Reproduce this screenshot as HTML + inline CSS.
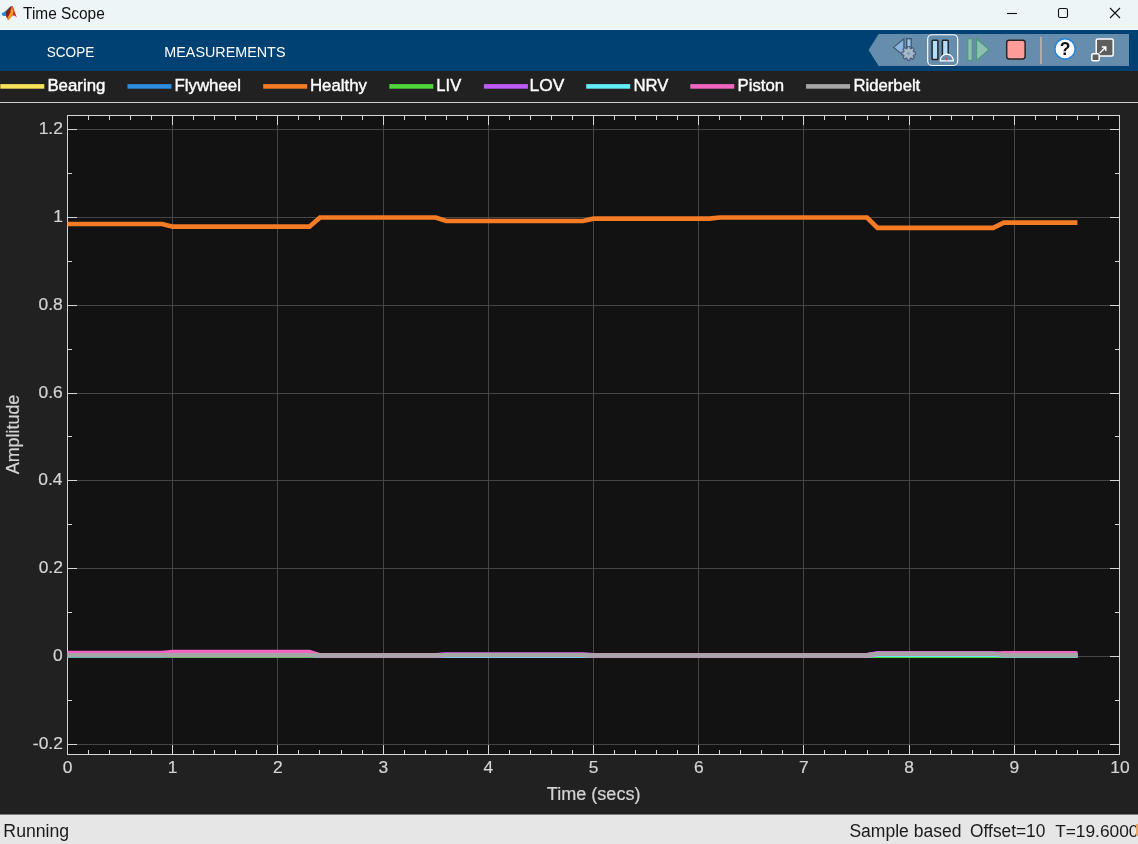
<!DOCTYPE html>
<html>
<head>
<meta charset="utf-8">
<title>Time Scope</title>
<style>
html,body{margin:0;padding:0;}
body{width:1138px;height:844px;overflow:hidden;background:#212121;position:relative;font-family:"Liberation Sans",sans-serif;}
#titlebar{position:absolute;left:0;top:0;width:1138px;height:29px;background:#edf5f7;border-bottom:1px solid #fbfdfd;}
#strip{position:absolute;left:0;top:30px;width:1138px;height:41px;background:#004173;}
#legend{position:absolute;left:0;top:71px;width:1138px;height:31px;background:#212121;white-space:nowrap;overflow:hidden;}
#legline{position:absolute;left:0;top:102px;width:1138px;height:1px;background:#cfcfcf;}
.li{position:relative;display:inline-block;height:31px;vertical-align:top;margin-right:24px;}
.li i{display:inline-block;width:44px;height:4.6px;margin-right:2px;position:relative;top:-4.1px;vertical-align:baseline;}
.li b{font-weight:normal;font-size:16.67px;color:#f4f4f4;line-height:31px;position:relative;top:1.2px;}
#status{position:absolute;left:0;top:814px;width:1138px;height:29px;border-top:1px solid #7c7c7c;background:#e6e6e6;font-size:17.33px;color:#1c1c1c;white-space:pre;overflow:hidden;}
#status span{position:absolute;top:0;line-height:30px;}
#plot{position:absolute;left:0;top:0;will-change:transform;}
#chrome{position:absolute;left:0;top:0;will-change:transform;}
</style>
</head>
<body>
<div id="titlebar"></div>
<div id="strip"></div>
<div id="legend"></div>
<div id="legline"></div>
<div id="status"></div>
<svg id="plot" width="1138" height="844" viewBox="0 0 1138 844">
<rect x="67" y="115" width="1053" height="640" fill="#121212"/>
<path d="M172.5 115.5V754.5M277.5 115.5V754.5M383.5 115.5V754.5M488.5 115.5V754.5M593.5 115.5V754.5M698.5 115.5V754.5M803.5 115.5V754.5M909.5 115.5V754.5M1014.5 115.5V754.5M67.5 129.5H1119.5M67.5 217.5H1119.5M67.5 305.5H1119.5M67.5 393.5H1119.5M67.5 480.5H1119.5M67.5 568.5H1119.5M67.5 656.5H1119.5M67.5 744.5H1119.5" stroke="#454545" stroke-width="1" fill="none" shape-rendering="crispEdges"/>
<path d="M88.5 115.5v4.5M88.5 754.5v-4.5M109.5 115.5v4.5M109.5 754.5v-4.5M130.5 115.5v4.5M130.5 754.5v-4.5M151.5 115.5v4.5M151.5 754.5v-4.5M172.5 115.5v9.5M172.5 754.5v-9.5M193.5 115.5v4.5M193.5 754.5v-4.5M214.5 115.5v4.5M214.5 754.5v-4.5M235.5 115.5v4.5M235.5 754.5v-4.5M256.5 115.5v4.5M256.5 754.5v-4.5M277.5 115.5v9.5M277.5 754.5v-9.5M298.5 115.5v4.5M298.5 754.5v-4.5M319.5 115.5v4.5M319.5 754.5v-4.5M341.5 115.5v4.5M341.5 754.5v-4.5M362.5 115.5v4.5M362.5 754.5v-4.5M383.5 115.5v9.5M383.5 754.5v-9.5M404.5 115.5v4.5M404.5 754.5v-4.5M425.5 115.5v4.5M425.5 754.5v-4.5M446.5 115.5v4.5M446.5 754.5v-4.5M467.5 115.5v4.5M467.5 754.5v-4.5M488.5 115.5v9.5M488.5 754.5v-9.5M509.5 115.5v4.5M509.5 754.5v-4.5M530.5 115.5v4.5M530.5 754.5v-4.5M551.5 115.5v4.5M551.5 754.5v-4.5M572.5 115.5v4.5M572.5 754.5v-4.5M593.5 115.5v9.5M593.5 754.5v-9.5M614.5 115.5v4.5M614.5 754.5v-4.5M635.5 115.5v4.5M635.5 754.5v-4.5M656.5 115.5v4.5M656.5 754.5v-4.5M677.5 115.5v4.5M677.5 754.5v-4.5M698.5 115.5v9.5M698.5 754.5v-9.5M719.5 115.5v4.5M719.5 754.5v-4.5M740.5 115.5v4.5M740.5 754.5v-4.5M761.5 115.5v4.5M761.5 754.5v-4.5M782.5 115.5v4.5M782.5 754.5v-4.5M803.5 115.5v9.5M803.5 754.5v-9.5M824.5 115.5v4.5M824.5 754.5v-4.5M845.5 115.5v4.5M845.5 754.5v-4.5M867.5 115.5v4.5M867.5 754.5v-4.5M888.5 115.5v4.5M888.5 754.5v-4.5M909.5 115.5v9.5M909.5 754.5v-9.5M930.5 115.5v4.5M930.5 754.5v-4.5M951.5 115.5v4.5M951.5 754.5v-4.5M972.5 115.5v4.5M972.5 754.5v-4.5M993.5 115.5v4.5M993.5 754.5v-4.5M1014.5 115.5v9.5M1014.5 754.5v-9.5M1035.5 115.5v4.5M1035.5 754.5v-4.5M1056.5 115.5v4.5M1056.5 754.5v-4.5M1077.5 115.5v4.5M1077.5 754.5v-4.5M1098.5 115.5v4.5M1098.5 754.5v-4.5M67.5 744.5h9.5M1119.5 744.5h-9.5M67.5 700.5h4.5M1119.5 700.5h-4.5M67.5 656.5h9.5M1119.5 656.5h-9.5M67.5 612.5h4.5M1119.5 612.5h-4.5M67.5 568.5h9.5M1119.5 568.5h-9.5M67.5 524.5h4.5M1119.5 524.5h-4.5M67.5 480.5h9.5M1119.5 480.5h-9.5M67.5 436.5h4.5M1119.5 436.5h-4.5M67.5 393.5h9.5M1119.5 393.5h-9.5M67.5 349.5h4.5M1119.5 349.5h-4.5M67.5 305.5h9.5M1119.5 305.5h-9.5M67.5 261.5h4.5M1119.5 261.5h-4.5M67.5 217.5h9.5M1119.5 217.5h-9.5M67.5 173.5h4.5M1119.5 173.5h-4.5M67.5 129.5h9.5M1119.5 129.5h-9.5" stroke="#d6d6d6" stroke-width="1" fill="none"/>
<rect x="67.5" y="115.5" width="1052.0" height="639.0" fill="none" stroke="#d6d6d6" stroke-width="1" shape-rendering="crispEdges"/>
<polyline points="67.50,655.30 309.46,655.30 319.98,655.40 1077.42,655.40" fill="none" stroke="#f7e25a" stroke-width="4.7" stroke-linejoin="miter"/>
<polyline points="67.50,655.30 309.46,655.30 319.98,655.40 1077.42,655.40" fill="none" stroke="#2d8ce0" stroke-width="4.7" stroke-linejoin="miter"/>
<polyline points="67.50,224.00 162.18,224.00 172.70,226.70 309.46,226.70 319.98,217.50 435.70,217.50 446.22,221.00 582.98,221.00 593.50,218.70 709.22,218.70 719.74,217.50 867.02,217.50 877.54,227.90 993.26,227.90 1003.78,222.70 1077.42,222.70" fill="none" stroke="#f57b25" stroke-width="4.7" stroke-linejoin="miter"/>
<polyline points="67.50,655.15 162.18,655.15 172.70,655.70 309.46,655.70 319.98,655.40 867.02,655.40 877.54,655.65 993.26,655.65 1003.78,655.40 1077.42,655.40" fill="none" stroke="#50d73c" stroke-width="4.7" stroke-linejoin="miter"/>
<polyline points="67.50,655.00 309.46,655.00 319.98,655.40 435.70,655.40 446.22,654.60 582.98,654.60 593.50,655.40 867.02,655.40 877.54,653.35 993.26,653.35 1003.78,655.00 1077.42,655.00" fill="none" stroke="#be5af5" stroke-width="4.7" stroke-linejoin="miter"/>
<polyline points="67.50,654.95 162.18,654.95 172.70,654.50 309.46,654.50 319.98,655.40 435.70,655.40 446.22,655.70 582.98,655.70 593.50,655.40 867.02,655.40 877.54,654.55 993.26,654.55 1003.78,655.10 1077.42,655.10" fill="none" stroke="#64ebfa" stroke-width="4.7" stroke-linejoin="miter"/>
<polyline points="67.50,653.15 162.18,653.15 172.70,652.10 309.46,652.10 319.98,655.40 435.70,655.40 446.22,655.00 582.98,655.00 593.50,655.40 867.02,655.40 877.54,653.75 993.26,653.75 1003.78,653.30 1077.42,653.30" fill="none" stroke="#f065c0" stroke-width="4.7" stroke-linejoin="miter"/>
<polyline points="67.50,654.95 309.46,654.95 319.98,655.40 435.70,655.40 446.22,655.00 582.98,655.00 593.50,655.40 867.02,655.40 877.54,653.75 993.26,653.75 1003.78,655.10 1077.42,655.10" fill="none" stroke="#a6a6a6" stroke-width="4.1" stroke-linejoin="miter"/>
<g font-family="Liberation Sans, sans-serif" fill="#d4d4d4" stroke="#d4d4d4" stroke-width="0.2">
<text x="38.66" y="133.90" font-size="17.00" textLength="24.22" lengthAdjust="spacingAndGlyphs" >1.2</text>
<text x="53.21" y="221.90" font-size="17.00" textLength="9.69" lengthAdjust="spacingAndGlyphs" >1</text>
<text x="38.53" y="309.90" font-size="17.00" textLength="24.22" lengthAdjust="spacingAndGlyphs" >0.8</text>
<text x="38.57" y="397.90" font-size="17.00" textLength="24.22" lengthAdjust="spacingAndGlyphs" >0.6</text>
<text x="38.31" y="484.90" font-size="17.00" textLength="24.22" lengthAdjust="spacingAndGlyphs" >0.4</text>
<text x="38.66" y="572.90" font-size="17.00" textLength="24.22" lengthAdjust="spacingAndGlyphs" >0.2</text>
<text x="53.03" y="660.90" font-size="17.00" textLength="9.69" lengthAdjust="spacingAndGlyphs" >0</text>
<text x="32.86" y="748.90" font-size="17.00" textLength="30.03" lengthAdjust="spacingAndGlyphs" >-0.2</text>
<text x="62.76" y="773.00" font-size="17.00" textLength="9.69" lengthAdjust="spacingAndGlyphs" >0</text>
<text x="167.72" y="773.00" font-size="17.00" textLength="9.69" lengthAdjust="spacingAndGlyphs" >1</text>
<text x="273.14" y="773.00" font-size="17.00" textLength="9.69" lengthAdjust="spacingAndGlyphs" >2</text>
<text x="378.41" y="773.00" font-size="17.00" textLength="9.69" lengthAdjust="spacingAndGlyphs" >3</text>
<text x="483.61" y="773.00" font-size="17.00" textLength="9.69" lengthAdjust="spacingAndGlyphs" >4</text>
<text x="588.76" y="773.00" font-size="17.00" textLength="9.69" lengthAdjust="spacingAndGlyphs" >5</text>
<text x="693.90" y="773.00" font-size="17.00" textLength="9.69" lengthAdjust="spacingAndGlyphs" >6</text>
<text x="799.14" y="773.00" font-size="17.00" textLength="9.69" lengthAdjust="spacingAndGlyphs" >7</text>
<text x="904.34" y="773.00" font-size="17.00" textLength="9.69" lengthAdjust="spacingAndGlyphs" >8</text>
<text x="1009.56" y="773.00" font-size="17.00" textLength="9.69" lengthAdjust="spacingAndGlyphs" >9</text>
<text x="1110.30" y="773.00" font-size="17.00" textLength="19.38" lengthAdjust="spacingAndGlyphs" >10</text>
<text x="546.84" y="799.60" font-size="17.60" textLength="93.65" lengthAdjust="spacingAndGlyphs" xml:space="preserve" >Time (secs)</text>
<g transform="translate(18.8 474.5) rotate(-90)"><text x="0.30" y="0.00" font-size="17.60" textLength="79.49" lengthAdjust="spacingAndGlyphs" xml:space="preserve" >Amplitude</text></g>
</g>
<g font-family="Liberation Sans, sans-serif" fill="#ffffff" stroke="#ffffff" stroke-width="0.4">
<text x="47.38" y="90.90" font-size="16.90" textLength="58.10" lengthAdjust="spacingAndGlyphs" xml:space="preserve" >Bearing</text>
<text x="174.45" y="90.90" font-size="16.90" textLength="66.55" lengthAdjust="spacingAndGlyphs" xml:space="preserve" >Flywheel</text>
<text x="309.91" y="90.90" font-size="16.90" textLength="57.14" lengthAdjust="spacingAndGlyphs" xml:space="preserve" >Healthy</text>
<text x="436.33" y="90.90" font-size="16.90" textLength="24.91" lengthAdjust="spacingAndGlyphs" xml:space="preserve" >LIV</text>
<text x="529.64" y="90.90" font-size="16.90" textLength="34.72" lengthAdjust="spacingAndGlyphs" xml:space="preserve" >LOV</text>
<text x="633.40" y="90.90" font-size="16.90" textLength="34.94" lengthAdjust="spacingAndGlyphs" xml:space="preserve" >NRV</text>
<text x="737.53" y="90.90" font-size="16.90" textLength="46.62" lengthAdjust="spacingAndGlyphs" xml:space="preserve" >Piston</text>
<text x="853.45" y="90.90" font-size="16.90" textLength="66.84" lengthAdjust="spacingAndGlyphs" xml:space="preserve" >Riderbelt</text>
</g>
<rect x="0.30" y="84.1" width="44" height="4.6" fill="#f7e25a"/>
<rect x="127.50" y="84.1" width="44" height="4.6" fill="#2d8ce0"/>
<rect x="263.20" y="84.1" width="44" height="4.6" fill="#f57b25"/>
<rect x="389.35" y="84.1" width="44" height="4.6" fill="#50d73c"/>
<rect x="483.90" y="84.1" width="44" height="4.6" fill="#be5af5"/>
<rect x="586.20" y="84.1" width="44" height="4.6" fill="#64ebfa"/>
<rect x="690.30" y="84.1" width="44" height="4.6" fill="#f065c0"/>
<rect x="806.05" y="84.1" width="44" height="4.6" fill="#a6a6a6"/>
<g font-family="Liberation Sans, sans-serif" fill="#1a1a1a">
<text x="3.39" y="837.10" font-size="17.60" textLength="65.82" lengthAdjust="spacingAndGlyphs" xml:space="preserve" >Running</text>
<text x="849.41" y="837.10" font-size="17.60" textLength="112.00" lengthAdjust="spacingAndGlyphs" xml:space="preserve" >Sample based</text>
<text x="970.12" y="837.10" font-size="17.60" textLength="75.24" lengthAdjust="spacingAndGlyphs" xml:space="preserve" >Offset=10</text>
<text x="1055.15" y="837.10" font-size="17.33" textLength="83.35" lengthAdjust="spacingAndGlyphs" >T=19.6000</text>
<rect x="1136" y="824" width="2" height="11.5" fill="#e8a862"/>
</g>
</svg>
<svg id="chrome" width="1138" height="72" viewBox="0 0 1138 72">
<defs>
<linearGradient id="lgD" x1="0" y1="0" x2="1" y2="1"><stop offset="0" stop-color="#5a0c0c"/><stop offset="1" stop-color="#c7471c"/></linearGradient>
<linearGradient id="lgO" x1="0" y1="0" x2="0" y2="1"><stop offset="0" stop-color="#d8401a"/><stop offset=".35" stop-color="#f5a531"/><stop offset="1" stop-color="#f08a1f"/></linearGradient>
</defs>
<!-- MATLAB logo -->
<path d="M1.7 13.3 L4.2 11.9 L6.4 10.2 L8.2 8.4 L10.4 6.3 L11.2 7.6 L8.2 12 L7.4 14.6 L6.4 16.1 L3.4 15.9 L2 14.8 Z" fill="#2f86d2"/>
<path d="M6.1 11.7 L10.9 6.3 L11.8 6 L11.6 16.2 L8.3 20.1 L6.1 16.8 Z" fill="url(#lgD)"/>
<path d="M11.3 6 L12.6 6.1 L14.2 12.2 L12.6 15.6 L8.3 20.1 L7.1 18.2 L10.4 13 Z" fill="url(#lgO)"/>
<path d="M12.6 6.1 L16 15.4 L16.9 17.5 L14.6 15.4 L12.4 15.8 L13.4 12 Z" fill="#cf2c14"/>
<!-- title -->
<g font-family="Liberation Sans, sans-serif" fill="#101010"><text x="23.09" y="18.70" font-size="15.80" textLength="81.68" lengthAdjust="spacingAndGlyphs" xml:space="preserve" >Time Scope</text></g>
<!-- window controls -->
<g stroke="#111" stroke-width="1.1" fill="none">
<path d="M1007 13.5H1017"/>
<rect x="1058.5" y="8.5" width="9" height="9" rx="1.5"/>
<path d="M1110 8L1120 18M1120 8L1110 18"/>
</g>
<!-- tabs -->
<g font-family="Liberation Sans, sans-serif" fill="#ffffff"><text x="46.79" y="56.80" font-size="15.40" textLength="47.47" lengthAdjust="spacingAndGlyphs" xml:space="preserve" >SCOPE</text><text x="164.35" y="56.80" font-size="15.40" textLength="121.10" lengthAdjust="spacingAndGlyphs" xml:space="preserve" >MEASUREMENTS</text></g>
<!-- quick access panel -->
<path d="M868.6 50 L878.6 34 H1129 V66 H878.6 Z" fill="#ffffff" fill-opacity="0.4"/>
<!-- icon1: step back w/ gear (disabled) -->
<g>
<path d="M903.9 38.7 V55.6 L893.6 47.4 Z" fill="#8db6de" stroke="#42586f" stroke-width="1.2" stroke-linejoin="miter"/>
<rect x="906.7" y="38.7" width="4.5" height="9.5" fill="#9cc8f0" stroke="#42586f" stroke-width="1.4"/>
<g transform="translate(908.6 53.4)">
<g fill="#a9b8c8" stroke="#48607a" stroke-width="1.2" stroke-linejoin="round">
<path id="gear" d="M-1.2 -6.9 H1.2 L1.6 -5 L2.4 -4.7 L4 -5.8 L5.7 -4.1 L4.6 -2.5 L5 -1.6 L6.9 -1.2 V1.2 L5 1.6 L4.6 2.5 L5.7 4.1 L4 5.8 L2.4 4.7 L1.6 5 L1.2 6.9 H-1.2 L-1.6 5 L-2.4 4.7 L-4 5.8 L-5.7 4.1 L-4.6 2.5 L-5 1.6 L-6.9 1.2 V-1.2 L-5 -1.6 L-4.6 -2.5 L-5.7 -4.1 L-4 -5.8 L-2.4 -4.7 L-1.6 -5 Z"/>
</g>
<path d="M0 -2 L2 0 L0 2 L-2 0 Z" fill="#7b9cc0"/>
</g>
</g>
<!-- icon2: pause (selected) -->
<rect x="927.7" y="34.7" width="30" height="30.8" rx="4.5" fill="none" stroke="#ffffff" stroke-width="1.15"/>
<rect x="932.1" y="40.2" width="5.8" height="19.3" rx="0.8" fill="#b5ddff" stroke="#252525" stroke-width="1.5"/>
<rect x="942.4" y="40.2" width="5.8" height="17" rx="0.8" fill="#b5ddff" stroke="#252525" stroke-width="1.5"/>
<path d="M940.2 60.8 A6.6 6.6 0 0 1 953.4 60.8 Z" fill="#668fb3" stroke="#ffffff" stroke-width="1.25" stroke-linejoin="round"/>
<path d="M946.9 60.3 L945.6 57.2" stroke="#e8402a" stroke-width="1.3" fill="none"/>
<!-- icon3: step forward (disabled) -->
<rect x="967.8" y="38.8" width="4.4" height="21.6" fill="#8fbfb2" stroke="#4a9a7b" stroke-width="1.1"/>
<path d="M976.6 38.8 V60.4 L989 49.6 Z" fill="#8fbfb2" stroke="#4a9a7b" stroke-width="1.1"/>
<!-- icon4: stop -->
<rect x="1006.7" y="40.2" width="18.4" height="18.8" rx="2.4" fill="#ff9d9b" stroke="#2a2626" stroke-width="1.5"/>
<!-- separator -->
<rect x="1040" y="37" width="2" height="27" fill="#b3aba6"/>
<!-- help -->
<circle cx="1065" cy="48.9" r="10.1" fill="#ffffff" stroke="#1f86e0" stroke-width="1.4"/>
<text x="1065" y="55.2" text-anchor="middle" font-family="Liberation Sans, sans-serif" font-weight="bold" font-size="17.5" fill="#111">?</text>
<!-- undock -->
<rect x="1096.2" y="39" width="17" height="17" rx="1.5" fill="#5e5e5e" stroke="#ffffff" stroke-width="1.5"/>
<rect x="1091.8" y="53.8" width="7.4" height="7" rx="1.4" fill="#5e5e5e" stroke="#ffffff" stroke-width="1.5"/>
<path d="M1099.8 53 L1105.4 47.4 M1101.8 47 H1105.8 V51" fill="none" stroke="#ffffff" stroke-width="1.4"/>

</svg>
</body>
</html>
